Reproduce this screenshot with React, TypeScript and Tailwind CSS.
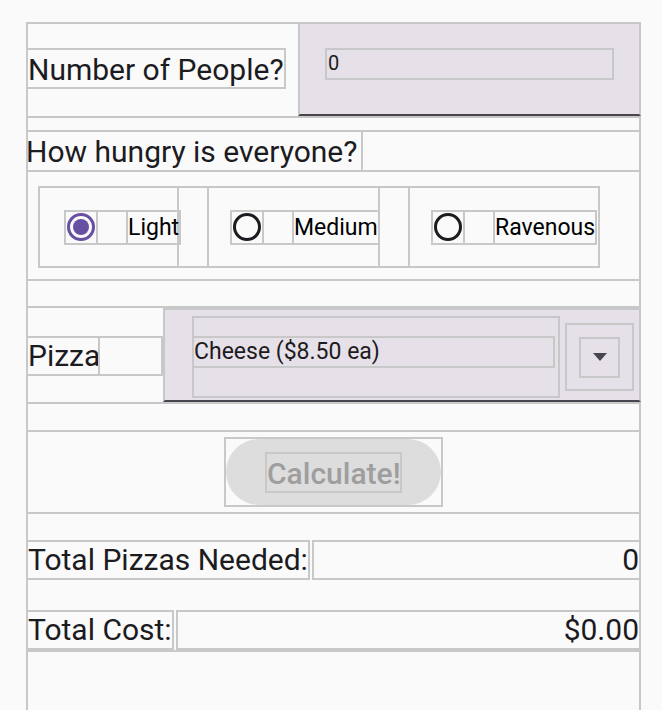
import React from "react";

const line = "border-2 border-[#c8c8c8]";

function Radio({ checked }: { checked?: boolean }) {
  const color = checked ? "#6750a4" : "#1d1b20";
  return (
    <div className={`${line} flex h-[35px] w-[34px] shrink-0 items-center justify-center`}>
      <svg width="30" height="30" viewBox="0 0 30 30">
        <circle cx="15" cy="15" r="12.5" fill="none" stroke={color} strokeWidth="3" />
        {checked && <circle cx="15" cy="15" r="8" fill={color} />}
      </svg>
    </div>
  );
}

function Option({
  label,
  checked,
  className,
}: {
  label: string;
  checked?: boolean;
  className: string;
}) {
  return (
    <div className={`${line} flex h-[82px] shrink-0 items-center ${className}`}>
      <Radio checked={checked} />
      <div className={`${line} -ml-[2px] h-[35px] w-[32px] shrink-0`} />
      <div className={`${line} -ml-[2px] h-[35px] shrink-0 whitespace-nowrap pt-[1px] text-[23px] leading-[29px]`}>
        {label}
      </div>
    </div>
  );
}

function TotalRow({ label, value }: { label: string; value: string }) {
  return (
    <div className="flex h-[40px] text-[30px] leading-[34px] text-[#1c1b1f]">
      <div className={`${line} -ml-[2px] shrink-0 whitespace-nowrap pt-[1px]`}>{label}</div>
      <div className={`${line} -mr-[2px] ml-[2px] flex-1 pt-[1px] text-right`}>{value}</div>
    </div>
  );
}

export default function App() {
  return (
    <div
      className="min-h-[710px] overflow-hidden bg-[#fafafa] pt-[22px]"
      style={{ fontFamily: "Roboto, 'Noto Sans', sans-serif" }}
    >
      <div className="ml-[26px] flex h-[700px] w-[615px] flex-col border-x-2 border-t-2 border-[#c8c8c8]">
        {/* number of people */}
        <div className="-mt-[2px] flex h-[96px] border-b-2 border-[#c8c8c8]">
          <div className={`${line} -ml-[2px] mt-[26px] h-[41px] whitespace-nowrap pt-[2px] text-[30px] leading-[35px] text-[#1c1b1f]`}>
            Number of People?
          </div>
          <div className="-mr-[2px] ml-auto h-[94px] w-[343px] border-2 border-[#c8c8c8] border-b-[#49454f] bg-[#e6e0e9] pl-[25px] pt-[24px]">
            <div className={`${line} h-[32px] w-[289px] pl-[1px] text-[20px] leading-[26px] text-[#1d1b20]`}>0</div>
          </div>
        </div>

        {/* hunger */}
        <div className="mt-[12px] flex h-[42px] border-y-2 border-[#c8c8c8]">
          <div className="-ml-[2px] w-[337px] whitespace-nowrap border-r-2 border-[#c8c8c8] pt-[2px] text-[30px] leading-[35px] text-[#1c1b1f]">
            How hungry is everyone?
          </div>
        </div>
        <div className="h-[109px] border-b-2 border-[#c8c8c8] pl-[10px] pt-[14px]">
          <div className="flex">
            <Option label="Light" checked className="w-[141px] pl-[24px]" />
            <div className="h-[82px] w-[28px] shrink-0 border-y-2 border-[#c8c8c8]" />
            <Option label="Medium" className="w-[173px] pl-[21px]" />
            <div className="h-[82px] w-[28px] shrink-0 border-y-2 border-[#c8c8c8]" />
            <Option label="Ravenous" className="w-[192px] pl-[21px]" />
          </div>
        </div>
        <div className="h-[27px] border-b-2 border-[#c8c8c8]" />

        {/* pizza */}
        <div className="flex h-[96px] border-b-2 border-[#c8c8c8]">
          <div className={`${line} -ml-[2px] mt-[28px] h-[40px] w-[74px] pt-[1px] text-[30px] leading-[34px] text-[#1c1b1f]`}>
            Pizza
          </div>
          <div className={`${line} -ml-[2px] mt-[28px] h-[40px] w-[65px]`} />
          <div className="-mr-[2px] flex h-[94px] w-[478px] border-2 border-[#c8c8c8] border-b-[#49454f] bg-[#e6e0e9]">
            <div className={`${line} ml-[27px] mt-[6px] h-[82px] w-[368px]`}>
              <div className={`${line} -ml-[2px] mt-[18px] h-[32px] w-[363px] text-[23px] leading-[28px] text-[#1d1b20]`}>
                Cheese ($8.50 ea)
              </div>
            </div>
            <div className="flex flex-1 items-center justify-center pt-[4px]">
              <div className={`${line} flex h-[68px] w-[69px] items-center justify-center`}>
                <div className={`${line} flex h-[41px] w-[41px] items-center justify-center`}>
                  <svg width="14" height="8" viewBox="0 0 14 8">
                    <path d="M0 0h14L7 8z" fill="#49454f" />
                  </svg>
                </div>
              </div>
            </div>
          </div>
        </div>
        <div className="h-[28px] border-b-2 border-[#c8c8c8]" />

        {/* calculate */}
        <div className="flex h-[82px] items-center justify-center border-b-2 border-[#c8c8c8]">
          <div className={`${line} h-[70px] w-[219px]`}>
            <div className="flex h-full items-center justify-center rounded-full bg-[#dddddd]">
              <div className={`${line} h-[41px] w-[137px] whitespace-nowrap pt-[2px] text-center text-[30px] font-medium leading-[35px] text-[#9e9e9e]`}>
                Calculate!
              </div>
            </div>
          </div>
        </div>
        <div className="h-[26px]" />

        <TotalRow label="Total Pizzas Needed:" value="0" />
        <div className="h-[30px]" />
        <TotalRow label="Total Cost:" value="$0.00" />
        <div className="h-[2px] border-b-2 border-[#c8c8c8]" />
      </div>
    </div>
  );
}
